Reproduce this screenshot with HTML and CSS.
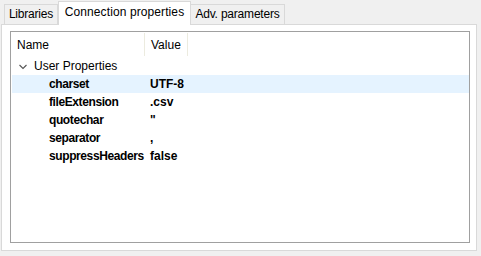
FILE: index.html
```html
<!DOCTYPE html>
<html>
<head>
<meta charset="utf-8">
<link rel="stylesheet" href="styles.css">
</head>
<body>
<div class="tabs">
  <div class="tab t-lib">Libraries</div>
  <div class="tab active t-conn">Connection properties</div>
  <div class="tab t-adv">Adv. parameters</div>
</div>
<div class="panel">
  <div class="table">
    <div class="header">
      <div class="hcell hname">Name</div>
      <div class="hcell hvalue">Value</div>
    </div>
    <div class="group">
      <svg class="chev" width="8" height="6" viewBox="0 0 8 6"><path d="M0.5 1 L4 4.5 L7.5 1" fill="none" stroke="#555" stroke-width="1.1"/></svg>
      <span>User Properties</span>
    </div>
    <div class="row hover"><span class="name">charset</span><span class="value">UTF-8</span></div>
    <div class="row"><span class="name">fileExtension</span><span class="value">.csv</span></div>
    <div class="row"><span class="name">quotechar</span><span class="value">"</span></div>
    <div class="row"><span class="name">separator</span><span class="value">,</span></div>
    <div class="row"><span class="name">suppressHeaders</span><span class="value">false</span></div>
  </div>
</div>
</body>
</html>
```
FILE: styles.css
```css
html, body {
  margin: 0;
  padding: 0;
  background: #f0f0f0;
  font-family: "Liberation Sans", Arial, sans-serif;
  font-size: 12px;
  color: #000;
  width: 481px;
  height: 256px;
  overflow: hidden;
}
.tabs {
  display: flex;
  align-items: flex-end;
  height: 24px;
  padding-left: 4px;
}
.tab {
  box-sizing: border-box;
  height: 20px;
  border: 1px solid #d9d9d9;
  border-bottom: none;
  background: #f0f0f0;
  line-height: 19px;
  white-space: nowrap;
  text-align: center;
  letter-spacing: -0.2px;
}
.t-lib { width: 54px; }
.t-conn { width: 133px; }
.t-adv { width: 94px; border-left: none; }
.tab.active {
  height: 24px;
  background: #fff;
  margin-bottom: -1px;
  position: relative;
  z-index: 1;
  line-height: 21px;
  letter-spacing: 0.1px;
}
.panel {
  box-sizing: border-box;
  margin-left: 1px;
  width: 476px;
  height: 227px;
  background: #fff;
  border: 1px solid #d9d9d9;
  padding: 6px 6px 7px 8px;
}
.table {
  box-sizing: border-box;
  height: 100%;
  border: 1px solid #a0a0a0;
  background: #fff;
}
.header {
  display: flex;
  height: 25px;
  align-items: stretch;
}
.hcell {
  box-sizing: border-box;
  display: flex;
  align-items: center;
  margin: 1px 0 1px 0;
  border-right: 1px solid #ecebdf;
}
.hname { width: 134px; padding-left: 6px; }
.hvalue { width: 43px; padding-left: 6px; }
.group {
  display: flex;
  align-items: center;
  height: 18px;
  padding-left: 8px;
}
.chev { margin-right: 7px; margin-top: 1px; }
.row {
  display: grid;
  grid-template-columns: 133px 1fr;
  height: 18px;
  align-items: center;
  margin: 0 0 0 1px;
  font-weight: bold;
}
.row.hover { background: #e5f3ff; }
.name { padding-left: 37px; white-space: nowrap; letter-spacing: -0.4px; }
.value { padding-left: 5px; }
```
